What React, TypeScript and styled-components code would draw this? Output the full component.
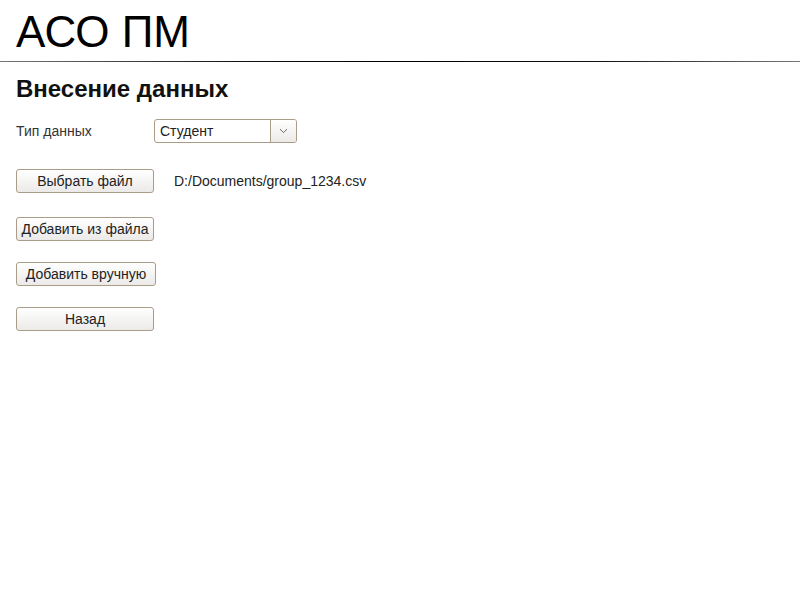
import * as React from "react";
import styled, { createGlobalStyle } from "styled-components";

const GlobalStyle = createGlobalStyle`
  html, body {
    margin: 0;
    padding: 0;
    background: #fff;
  }
  body {
    font-family: "Liberation Sans", Arial, sans-serif;
    color: #222;
  }
`;

const Page = styled.div`
  display: flex;
  flex-direction: column;
`;

const Header = styled.header`
  padding-top: 8px;
`;

const Title = styled.h1`
  margin: 0;
  padding-left: 16px;
  font-size: 44px;
  font-weight: normal;
  line-height: 48px;
  color: #000;
`;

const Rule = styled.div`
  margin-top: 5px;
  height: 1px;
  background: linear-gradient(to right, #777 0%, #111 30%, #000 50%, #111 75%, #777 100%);
`;

const Content = styled.main`
  padding: 13px 16px 0;
  display: flex;
  flex-direction: column;
`;

const Heading = styled.h2`
  margin: 0 0 16px;
  font-size: 24px;
  font-weight: bold;
  line-height: 28px;
  color: #111;
`;

const Row = styled.div<{ $top?: number }>`
  display: flex;
  align-items: center;
  margin-top: ${p => p.$top ?? 0}px;
`;

const Label = styled.span`
  width: 138px;
  font-size: 14px;
  color: #333;
`;

const Select = styled.div`
  display: flex;
  width: 143px;
  height: 24px;
  box-sizing: border-box;
  border: 1px solid #a99c88;
  border-radius: 3px;
  background: #fff;
  overflow: hidden;
`;

const SelectValue = styled.span`
  flex: 1;
  display: flex;
  align-items: center;
  padding-left: 5px;
  font-size: 14px;
  color: #222;
`;

const SelectArrow = styled.span`
  width: 25px;
  display: flex;
  align-items: center;
  justify-content: center;
  border-left: 1px solid #a99c88;
  background: linear-gradient(#ffffff, #eceae6);
`;

const Button = styled.button<{ $width?: number }>`
  width: ${p => p.$width ?? 138}px;
  height: 24px;
  padding: 0 3px;
  box-sizing: border-box;
  border: 1px solid #a99c88;
  border-radius: 3px;
  background: linear-gradient(#ffffff, #ebeae8);
  font-family: "Liberation Sans", Arial, sans-serif;
  font-size: 14px;
  color: #222;
  white-space: nowrap;
  cursor: pointer;
`;

const FilePath = styled.span`
  margin-left: 20px;
  font-size: 14px;
  color: #222;
`;

const Chevron = () => (
  <svg width="9" height="6" viewBox="0 0 9 6">
    <path d="M1 1.2 L4.5 4.6 L8 1.2" fill="none" stroke="#666" strokeWidth="1" />
  </svg>
);

export default function App() {
  return (
    <Page>
      <GlobalStyle />
      <Header>
        <Title>АСО ПМ</Title>
        <Rule />
      </Header>
      <Content>
        <Heading>Внесение данных</Heading>
        <Row>
          <Label>Тип данных</Label>
          <Select>
            <SelectValue>Студент</SelectValue>
            <SelectArrow>
              <Chevron />
            </SelectArrow>
          </Select>
        </Row>
        <Row $top={26}>
          <Button>Выбрать файл</Button>
          <FilePath>D:/Documents/group_1234.csv</FilePath>
        </Row>
        <Row $top={24}>
          <Button>Добавить из файла</Button>
        </Row>
        <Row $top={21}>
          <Button $width={140}>Добавить вручную</Button>
        </Row>
        <Row $top={21}>
          <Button>Назад</Button>
        </Row>
      </Content>
    </Page>
  );
}
